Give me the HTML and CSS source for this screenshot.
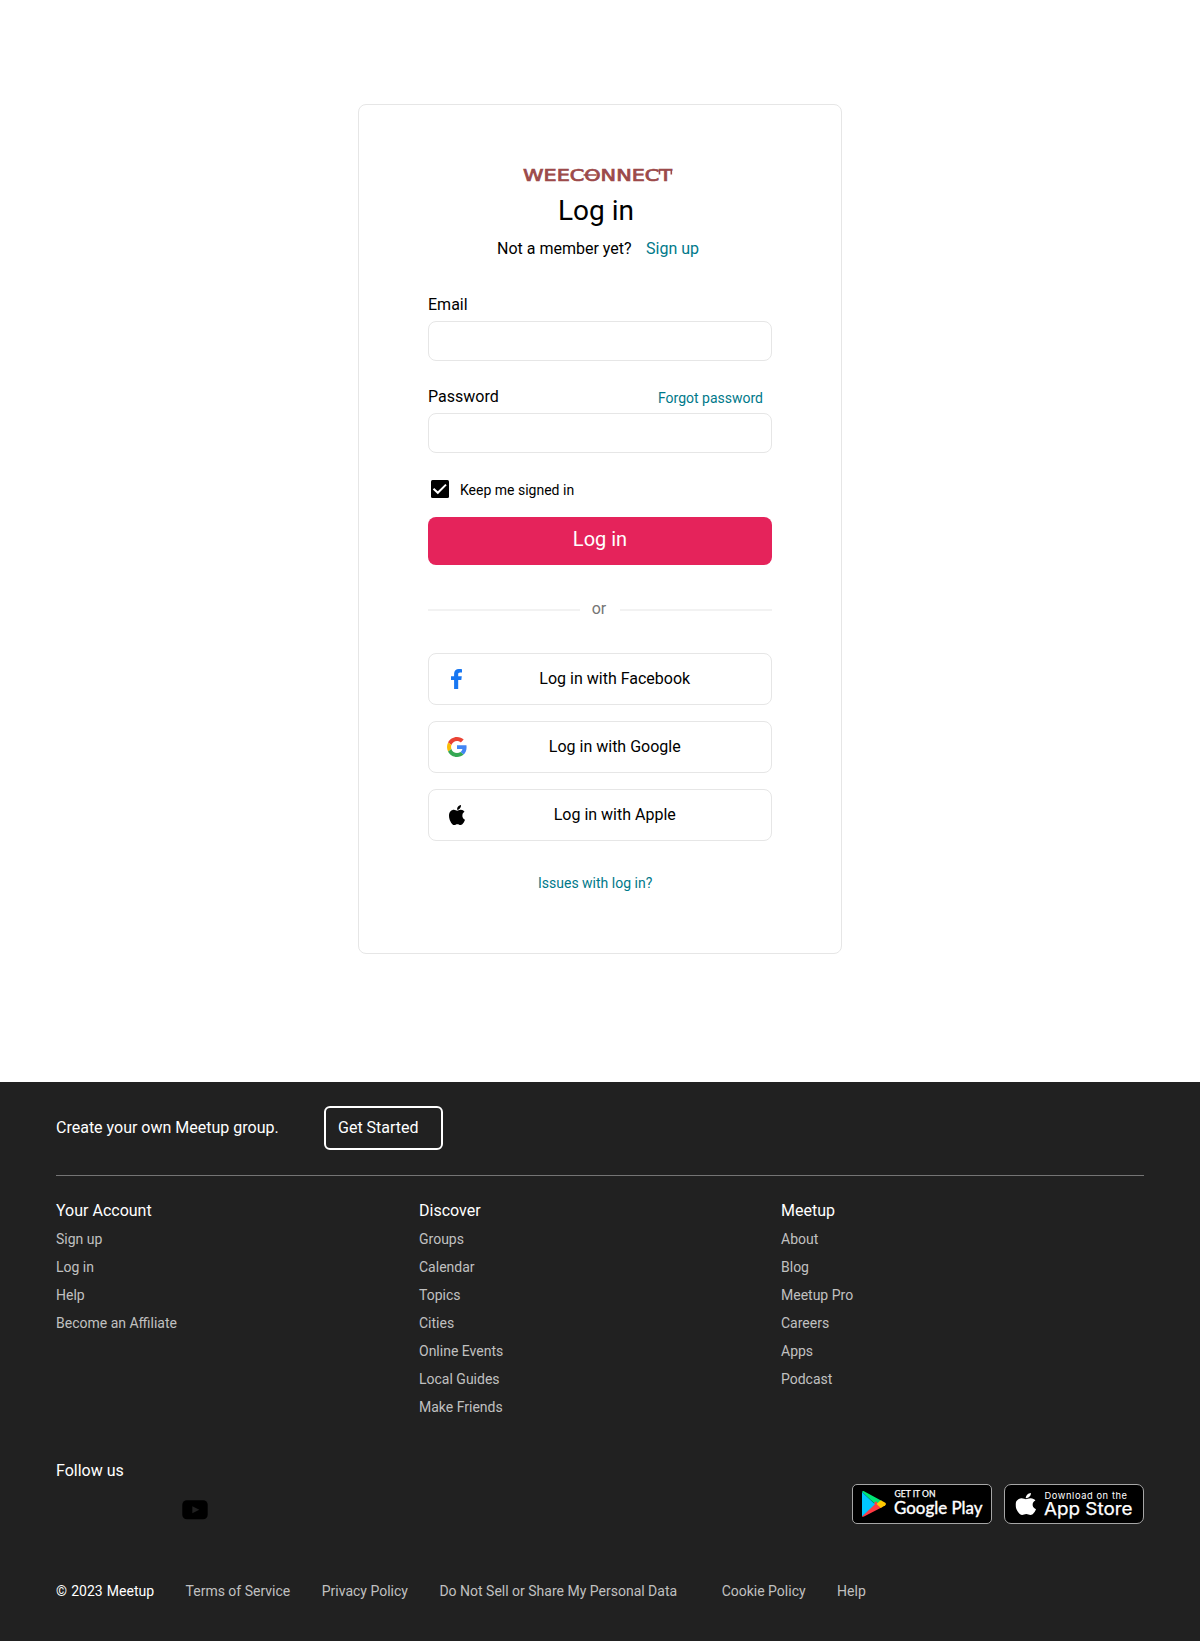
FILE: index.html
```html
<!DOCTYPE html>
<html lang="en">
<head>
<meta charset="utf-8">
<title>Log in</title>
<link rel="stylesheet" href="styles.css">
</head>
<body>
<svg class="defs" aria-hidden="true">
  <symbol id="apple" viewBox="4 32 376 448" preserveAspectRatio="none">
    <path d="M318.7 268.7c-.2-36.7 16.4-64.4 50-84.8-18.8-26.9-47.2-41.7-84.7-44.6-35.5-2.8-74.3 20.7-88.5 20.7-15 0-49.4-19.7-76.4-19.7C63.3 141.2 4 184.8 4 273.5q0 39.3 14.4 81.2c12.8 36.7 59 126.7 107.2 125.2 25.2-.6 43-17.9 75.8-17.9 31.8 0 48.3 17.9 76.4 17.9 48.6-.7 90.4-82.5 102.6-119.3-65.2-30.7-61.7-90-61.7-91.9zm-56.6-164.2c27.3-32.4 24.8-61.9 24-72.5-24.1 1.4-52 16.4-67.9 34.9-17.5 19.8-27.8 44.3-25.6 71.9 26.1 2 49.9-11.4 69.5-34.3z"/>
  </symbol>
</svg>
<main class="page">
  <section class="card">
    <svg class="logo" viewBox="0 0 160 24" role="img">
      <text x="5" y="18" textLength="149" lengthAdjust="spacingAndGlyphs">WEECONNECT</text>
      <path d="M65.500 12h13M141.500 7v4.500M153.300 7v4.500"/>
    </svg>
    <h1 class="title">Log in</h1>
    <p class="signup"><span>Not a member yet?</span><a class="link">Sign up</a></p>
    <form class="form">
      <label class="label" for="email">Email</label>
      <input class="input" id="email" type="text">
      <div class="label-row">
        <label class="label" for="password">Password</label>
        <a class="link small">Forgot password</a>
      </div>
      <input class="input" id="password" type="password">
      <div class="keep">
        <svg class="check" viewBox="0 0 18 18"><rect width="18" height="18" rx="1.5"/><path d="M2.5 8.7l4.3 4.1L15 4.6"/></svg>
        <span>Keep me signed in</span>
      </div>
      <button class="submit" type="button">Log in</button>
    </form>
    <div class="or"><span class="line"></span><span class="or-text">or</span><span class="line"></span></div>
    <div class="socials">
      <div class="social">
        <svg class="icon" viewBox="0 0 20 20"><path fill="#1877f2" d="M7.1 20v-9.1H4V7.3h3.1V4.7C7.1 1.6 9 0 11.8 0c1.3 0 2.5.1 3.2.3v3.1h-1.9c-1.5 0-1.9.8-1.9 1.8v2.1h3.6l-.5 3.6h-3.1V20z"/></svg>
        <span>Log in with Facebook</span>
      </div>
      <div class="social">
        <svg class="icon" viewBox="0 0 48 48">
          <path fill="#EA4335" d="M24 9.5c3.54 0 6.71 1.22 9.21 3.6l6.85-6.85C35.9 2.38 30.47 0 24 0 14.62 0 6.51 5.38 2.56 13.22l7.98 6.19C12.43 13.72 17.74 9.5 24 9.5z"/>
          <path fill="#4285F4" d="M46.98 24.55c0-1.57-.15-3.09-.38-4.55H24v9.02h12.94c-.58 2.96-2.26 5.48-4.78 7.18l7.73 6c4.51-4.18 7.09-10.36 7.09-17.65z"/>
          <path fill="#FBBC05" d="M10.53 28.59c-.48-1.45-.76-2.99-.76-4.59s.27-3.14.76-4.59l-7.98-6.19C.92 16.46 0 20.12 0 24c0 3.88.92 7.54 2.56 10.78l7.97-6.19z"/>
          <path fill="#34A853" d="M24 48c6.48 0 11.93-2.13 15.89-5.81l-7.73-6c-2.15 1.45-4.92 2.3-8.16 2.3-6.26 0-11.57-4.22-13.47-9.91l-7.98 6.19C6.51 42.62 14.62 48 24 48z"/>
        </svg>
        <span>Log in with Google</span>
      </div>
      <div class="social">
        <svg class="icon" viewBox="0 0 20 20"><use href="#apple" x="2" width="16" height="20"/></svg>
        <span>Log in with Apple</span>
      </div>
    </div>
    <a class="link small issues">Issues with log in?</a>
  </section>
</main>
<footer class="footer">
  <div class="create"><span>Create your own Meetup group.</span><a class="start">Get Started</a></div>
  <div class="columns">
    <ul class="column">
      <li class="head">Your Account</li><li>Sign up</li><li>Log in</li><li>Help</li><li>Become an Affiliate</li>
    </ul>
    <ul class="column">
      <li class="head">Discover</li><li>Groups</li><li>Calendar</li><li>Topics</li><li>Cities</li><li>Online Events</li><li>Local Guides</li><li>Make Friends</li>
    </ul>
    <ul class="column">
      <li class="head">Meetup</li><li>About</li><li>Blog</li><li>Meetup Pro</li><li>Careers</li><li>Apps</li><li>Podcast</li>
    </ul>
  </div>
  <div class="follow">
    <div>
      <div class="follow-title">Follow us</div>
      <svg class="youtube" viewBox="0 0 26 20"><rect x=".3" y=".3" width="25.4" height="19" rx="4.5"/><path fill="#212121" d="M10.3 6.3v7l7-3.5z"/></svg>
    </div>
    <div class="badges">
      <svg class="badge" viewBox="0 0 140 40">
        <rect x=".5" y=".5" width="139" height="39" rx="4.5"/>
        <path fill="#00e676" d="M10 8c.4-1 1-1.300 2-.7l17.500 9.500-4.500 5z"/>
        <path fill="#ff3a44" d="M10 32.300l14-15 5.500 6.200-17.500 9c-1 .5-1.700.4-2-.2z"/>
        <path fill="#00c8ff" d="M10 8v24.500L23 20.200z"/>
        <path fill="#ffc900" d="M28.800 16.200l4.500 2.600q1.700 1.200 0 2.500l-4.500 2.600-4.300-3.800z"/>
        <text class="get" x="42.500" y="13" textLength="41" lengthAdjust="spacingAndGlyphs">GET IT ON</text>
        <text class="play" x="42" y="30" textLength="88.500" lengthAdjust="spacingAndGlyphs">Google Play</text>
      </svg>
      <svg class="badge" viewBox="0 0 140 40">
        <rect x=".5" y=".5" width="139" height="39" rx="6.500"/>
        <use href="#apple" fill="#fff" x="11.500" y="9" width="20.500" height="22"/>
        <text class="download" x="40.500" y="14.800" textLength="82.500" lengthAdjust="spacing">Download on the</text>
        <text class="store" x="40" y="31" textLength="88.500" lengthAdjust="spacingAndGlyphs">App Store</text>
      </svg>
    </div>
  </div>
  <div class="legal">
    <span class="copy">© 2023 Meetup</span><span>Terms of Service</span><span>Privacy Policy</span><span class="sell">Do Not Sell or Share My Personal Data</span><span>Cookie Policy</span><span>Help</span>
  </div>
</footer>
</body>
</html>
```
FILE: styles.css
```css
* { box-sizing: border-box; }
body { margin: 0; background: #fff; color: #000; font: 16px/24px Roboto, "Liberation Sans", sans-serif; }
h1, p, ul { margin: 0; padding: 0; font-weight: 400; }
.defs { display: none; }
.page { height: 1082px; padding-top: 104px; }
.card { display: flex; flex-direction: column; width: 484px; height: 850px; margin: 0 auto; padding: 58px 69px 0; border: 1px solid #e6e6e6; border-radius: 8px; }
.logo { width: 160px; height: 24px; margin-left: 90px; }
.logo text { font: 15.5px "DejaVu Sans", sans-serif; fill: #9c4a4a; stroke: #9c4a4a; stroke-width: .7; }
.logo path { stroke: #9c4a4a; stroke-width: 1.6; }
.title { margin: 8px 0 0; padding-right: 8px; font-size: 28px; line-height: 32px; text-align: center; }
.signup { display: flex; gap: 14.5px; margin: 10px 0 0 69px; }
.link { color: #00798a; }
.small { font-size: 14px; line-height: 20px; }
.form { display: flex; flex-direction: column; margin-top: 32px; }
.input { width: 344px; height: 40px; margin-top: 4px; border: 1px solid #e6e6e6; border-radius: 8px; background: #fff; }
.label-row { display: flex; justify-content: space-between; align-items: flex-start; height: 24px; margin-top: 24px; padding-right: 9px; }
.label-row .small { margin-top: 3px; }
.keep { display: flex; gap: 11px; height: 20px; margin: 27px 0 17px 3px; font-size: 14px; line-height: 20px; }
.check { width: 18px; height: 18px; }
.check path { fill: none; stroke: #fff; stroke-width: 2; }
.submit { height: 48px; padding: 0 0 4px; border: 0; border-radius: 8px; background: #e5235b; color: #fff; font: 20px/44px Roboto, sans-serif; }
.or { display: flex; justify-content: space-between; height: 24px; margin-top: 32px; color: #757575; }
.or-text { padding-right: 2px; }
.line { width: 152px; height: 2px; margin-top: 12px; background: #f2f2f2; }
.socials { display: flex; flex-direction: column; gap: 16px; margin-top: 32px; }
.social { display: flex; height: 52px; padding: 13px 18px 0; border: 1px solid #e6e6e6; border-radius: 8px; }
.social span { flex: 1; padding-left: 9.5px; text-align: center; }
.icon { width: 20px; height: 20px; margin-top: 2px; }
.issues { margin: 32px 0 0 110px; }
.footer { height: 559px; padding: 24px 56px 0; background: #212121; color: #fff; }
.create { display: flex; height: 70px; padding-top: 10px; border-bottom: 1px solid #757575; }
.create span { width: 268px; }
.start { width: 119px; height: 44px; margin-top: -10px; padding: 8px 12px; border: 2px solid #fff; border-radius: 6px; }
.columns { display: grid; grid-template-columns: 363px 362px 1fr; height: 259px; padding-top: 23px; }
.column { list-style: none; }
.column li { height: 28px; font-size: 14px; line-height: 28px; color: #c0c0c0; }
.column .head { height: 26px; font-size: 16px; line-height: 24px; color: #fff; }
.follow { display: flex; justify-content: space-between; height: 121px; padding-top: 24px; }
.youtube { display: block; width: 26px; height: 20px; margin: 17px 0 0 126px; }
.badges { display: flex; gap: 12px; padding-top: 25px; }
.badge { width: 140px; height: 40px; }
.badge rect { stroke: #a6a6a6; }
.badge text { fill: #fff; }
.get { font: 8.5px Lato, sans-serif; stroke: #fff; stroke-width: .25; }
.play { font: 17.5px Lato, sans-serif; stroke: #fff; stroke-width: .4; }
.download { font: 9.3px Inter, sans-serif; }
.store { font: 17.5px Inter, sans-serif; stroke: #fff; stroke-width: .25; }
.legal { display: flex; gap: 31.5px; padding-top: 25px; font-size: 14px; line-height: 20px; color: #c0c0c0; }
.copy { word-spacing: .7px; color: #fff; }
.sell { margin-right: 13px; }
```
